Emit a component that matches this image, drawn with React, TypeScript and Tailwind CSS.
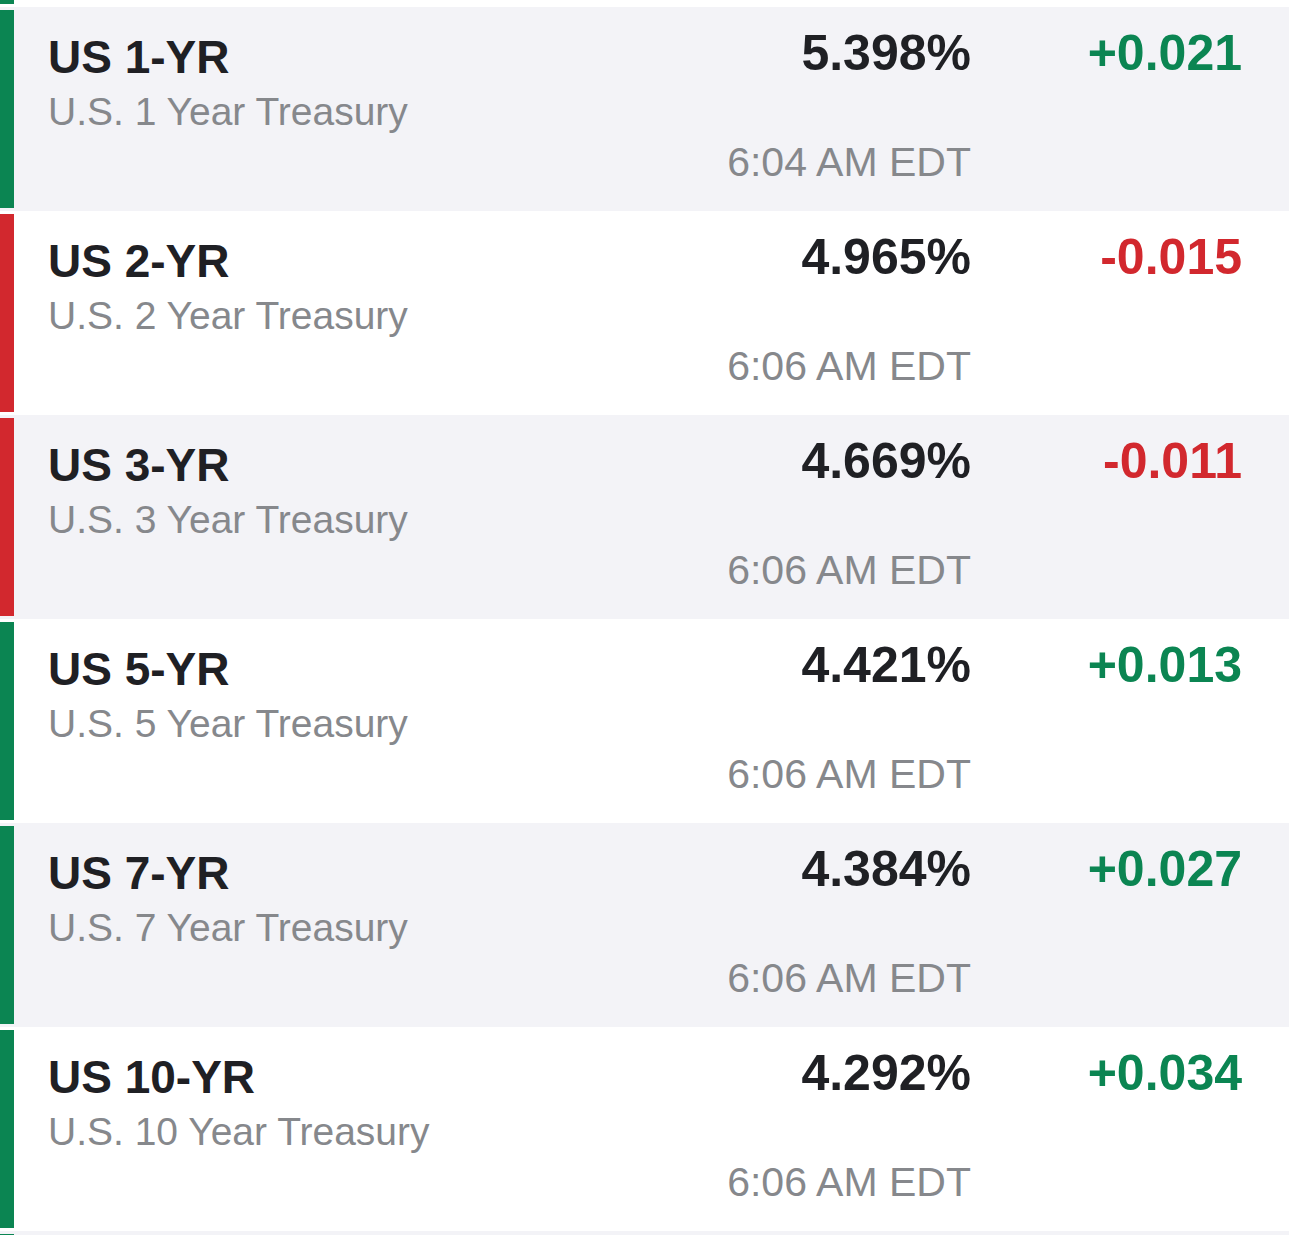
const rows = [
  { symbol: "US 1-YR", name: "U.S. 1 Year Treasury", yld: "5.398%", change: "+0.021", time: "6:04 AM EDT", up: true },
  { symbol: "US 2-YR", name: "U.S. 2 Year Treasury", yld: "4.965%", change: "-0.015", time: "6:06 AM EDT", up: false },
  { symbol: "US 3-YR", name: "U.S. 3 Year Treasury", yld: "4.669%", change: "-0.011", time: "6:06 AM EDT", up: false },
  { symbol: "US 5-YR", name: "U.S. 5 Year Treasury", yld: "4.421%", change: "+0.013", time: "6:06 AM EDT", up: true },
  { symbol: "US 7-YR", name: "U.S. 7 Year Treasury", yld: "4.384%", change: "+0.027", time: "6:06 AM EDT", up: true },
  { symbol: "US 10-YR", name: "U.S. 10 Year Treasury", yld: "4.292%", change: "+0.034", time: "6:06 AM EDT", up: true },
];

type Row = (typeof rows)[number];

function QuoteRow({ row, shaded }: { row: Row; shaded: boolean }) {
  return (
    <div className={`flex h-[204px] ${shaded ? "bg-[#f3f3f7]" : "bg-white"}`}>
      <div className={`my-[3px] w-[14px] shrink-0 ${row.up ? "bg-[#0b8552]" : "bg-[#d2282e]"}`} />
      <div className="flex-1 pl-[34px] pt-[27px]">
        <div className="text-[46px] font-bold leading-none text-[#1f2024]">{row.symbol}</div>
        <div className="mt-[12px] text-[39px] leading-none text-[#86888c]">{row.name}</div>
      </div>
      <div className="flex flex-col items-end pt-[21px]">
        <div className="text-[50px] font-bold leading-none text-[#1f2024]">{row.yld}</div>
        <div className="mt-[64px] text-[41px] leading-none text-[#86888c]">{row.time}</div>
      </div>
      <div
        className={`w-[318px] pr-[47px] pt-[21px] text-right text-[50px] font-bold leading-none ${
          row.up ? "text-[#0b8552]" : "text-[#d2282e]"
        }`}
      >
        {row.change}
      </div>
    </div>
  );
}

export default function App() {
  return (
    <div className="w-[1289px] bg-white font-['Liberation_Sans',Arial,sans-serif]">
      <div className="flex h-[7px] bg-white">
        <div className="mb-[3px] w-[14px] bg-[#0b8552]" />
      </div>
      {rows.map((r, i) => (
        <QuoteRow key={r.symbol} row={r} shaded={i % 2 === 0} />
      ))}
      <div className="flex h-[204px] bg-[#f3f3f7]">
        <div className="my-[3px] w-[14px] bg-[#0b8552]" />
      </div>
    </div>
  );
}
